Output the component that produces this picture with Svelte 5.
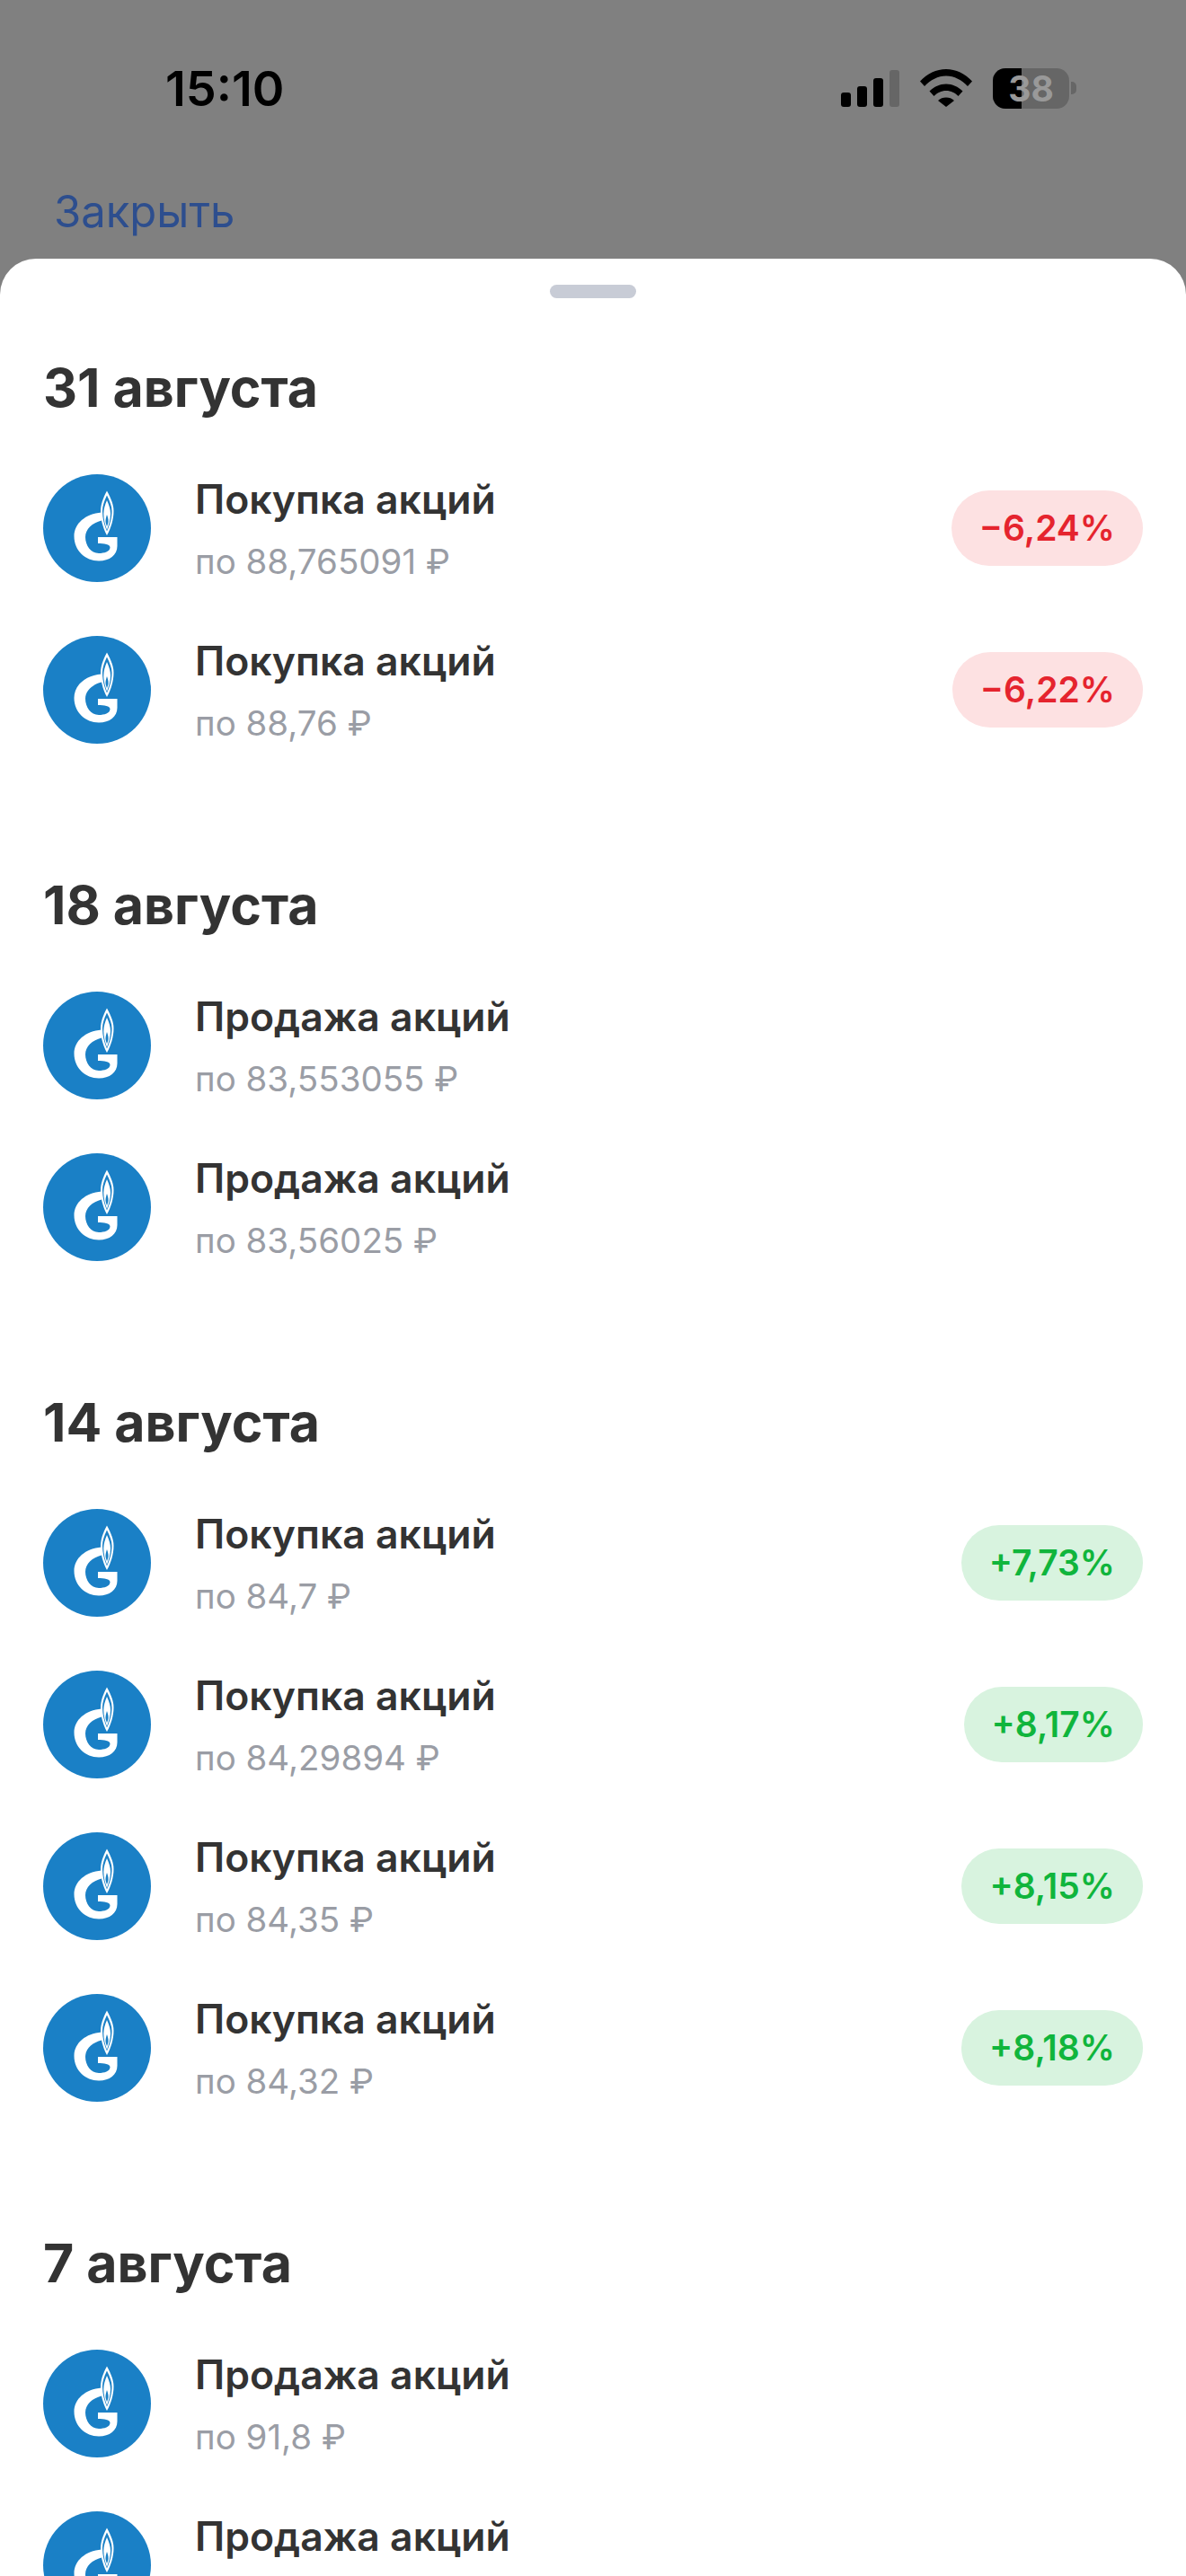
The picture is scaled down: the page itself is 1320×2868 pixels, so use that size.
<script>
	const up = (v) => ({ text: v, tone: 'up' });
	const down = (v) => ({ text: v, tone: 'down' });

	const sections = [
		{
			date: '31 августа',
			rows: [
				{ title: 'Покупка акций', price: 'по 88,765091 ₽', badge: down('−6,24%') },
				{ title: 'Покупка акций', price: 'по 88,76 ₽', badge: down('−6,22%') }
			]
		},
		{
			date: '18 августа',
			rows: [
				{ title: 'Продажа акций', price: 'по 83,553055 ₽' },
				{ title: 'Продажа акций', price: 'по 83,56025 ₽' }
			]
		},
		{
			date: '14 августа',
			rows: [
				{ title: 'Покупка акций', price: 'по 84,7 ₽', badge: up('+7,73%') },
				{ title: 'Покупка акций', price: 'по 84,29894 ₽', badge: up('+8,17%') },
				{ title: 'Покупка акций', price: 'по 84,35 ₽', badge: up('+8,15%') },
				{ title: 'Покупка акций', price: 'по 84,32 ₽', badge: up('+8,18%') }
			]
		},
		{
			date: '7 августа',
			rows: [
				{ title: 'Продажа акций', price: 'по 91,8 ₽' },
				{ title: 'Продажа акций', price: 'по 91,75 ₽' }
			]
		}
	];
</script>

<div class="screen">
	<header class="top">
		<div class="status">
			<span class="time">15:10</span>
			<div class="indicators">
				<div class="signal">
					<i style="height: 16px"></i>
					<i style="height: 23px"></i>
					<i style="height: 32px"></i>
					<i class="off" style="height: 41px"></i>
				</div>
				<svg class="wifi" viewBox="0 0 58 42" width="58" height="42">
					<path d="M0 13.5C8 5 18 0 29 0s21 5 29 13.5l-5 5.5C46.500 12 38 7.500 29 7.500S11.500 12 5 19z" />
					<path d="M10.500 24.500C15.500 19.500 22 16.500 29 16.500s13.500 3 18.500 8l-5 5.500C39 26.500 34.500 24 29 24s-10 2.500-13.500 6z" />
					<path d="M20 35c2.500-2.500 5.500-3.500 9-3.500s6.500 1 9 3.500l-9 7z" />
				</svg>
				<div class="battery">
					<div class="cell">
						<div class="charge"></div>
						<span>38</span>
					</div>
					<div class="tip"></div>
				</div>
			</div>
		</div>
		<div class="close">Закрыть</div>
	</header>

	<main class="sheet">
		<div class="handle"></div>
		{#each sections as section}
			<section>
				<h2>{section.date}</h2>
				<div class="rows">
					{#each section.rows as row}
						<div class="row">
							<svg class="logo" viewBox="0 0 120 120" width="120" height="120">
								<circle cx="60" cy="60" r="60" fill="#1a80c6" />
								<!-- flame: outer shell, gap, inner tongue, core -->
								<path
									fill="#fff"
									d="M71 18.500C66.500 27 64 34 64 41C64 50 66.500 60 71 68C75.500 60 78.500 50 78.500 41C78.500 34 75.500 27 71 18.500Z"
								/>
								<path
									fill="#1a80c6"
									d="M71 23.500C67.800 30 66 35.500 66 41C66 49 68 57 71 63.500C74 57 76.500 49 76.500 41C76.500 35.500 74.200 30 71 23.500Z"
								/>
								<path
									fill="#fff"
									d="M71 29C68.800 34 67.300 39 67.300 44C67.300 50 69 56.500 71 62C73 56.500 75 50 75 44C75 39 73.200 34 71 29Z"
								/>
								<path
									fill="#1a80c6"
									d="M71 45C70 48 69.500 50 69.500 52C69.500 54 70.200 56 71 58C71.800 56 72.600 54 72.600 52C72.600 50 72 48 71 45Z"
								/>
								<!-- G -->
								<path
									fill="#fff"
									d="M65 42.500C47 44 34.500 55 34.500 69C34.500 85 47 96.500 62 96.500C74 96.500 82.500 90 82.500 80V70H61V77C68 77 74.500 78 74.500 81.500C74.500 86 68 88 62 88C53 88 47 79 47 70C47 61 55 54 65 51.500Z"
								/>
							</svg>
							<div class="info">
								<div class="name">{row.title}</div>
								<div class="price">{row.price}</div>
							</div>
							{#if row.badge}
								<div class="badge {row.badge.tone}">{row.badge.text}</div>
							{/if}
						</div>
					{/each}
				</div>
			</section>
		{/each}
	</main>
</div>

<style>
	:global(body) {
		margin: 0;
		background: #fff;
	}

	.screen {
		width: 1320px;
		height: 2868px;
		overflow: hidden;
		background: #808080;
		font-family: Inter, 'Noto Sans', sans-serif;
		color: #333;
		display: flex;
		flex-direction: column;
	}

	.top {
		height: 288px;
		flex: none;
		box-sizing: border-box;
		padding-top: 66px;
	}

	.status {
		display: flex;
		justify-content: space-between;
		align-items: center;
		height: 64px;
		padding: 0 122px 0 184px;
	}

	.time {
		font-size: 54px;
		font-weight: 600;
		color: #000;
	}

	.indicators {
		display: flex;
		align-items: center;
	}

	.signal {
		display: flex;
		align-items: flex-end;
		gap: 7px;
		height: 41px;
		margin-right: 23px;
	}

	.signal i {
		display: block;
		width: 11px;
		background: #000;
		border-radius: 3px;
	}

	.signal i.off {
		background: #666;
	}

	.wifi {
		fill: #000;
		margin-right: 23px;
	}

	.battery {
		display: flex;
		align-items: center;
		gap: 2px;
	}

	.cell {
		width: 85px;
		height: 45px;
		border-radius: 14px;
		background: #666;
		overflow: hidden;
		position: relative;
		display: flex;
		align-items: center;
		justify-content: center;
	}

	.charge {
		position: absolute;
		left: 0;
		top: 0;
		bottom: 0;
		width: 32px;
		background: #000;
	}

	.cell span {
		position: relative;
		font-size: 39px;
		font-weight: 700;
		color: #999;
		line-height: 1;
	}

	.tip {
		width: 6px;
		height: 14px;
		background: #666;
		border-radius: 0 5px 5px 0;
	}

	.close {
		margin: 76px 0 0 60px;
		font-size: 49px;
		line-height: 60px;
		color: #2d4e8e;
	}

	.sheet {
		flex: 1;
		background: #fff;
		border-radius: 40px 40px 0 0;
		padding: 29px 48px 0;
	}

	.handle {
		width: 96px;
		height: 15px;
		margin: 0 auto 64px;
		border-radius: 8px;
		background: #c8ccd6;
	}

	section {
		margin-bottom: 144px;
	}

	h2 {
		margin: 0 0 60px;
		font-size: 59px;
		line-height: 72px;
		font-weight: 700;
		color: #333;
	}

	.rows {
		display: flex;
		flex-direction: column;
		gap: 60px;
	}

	.row {
		display: flex;
		align-items: center;
		height: 120px;
	}

	.logo {
		flex: none;
		margin-right: 49px;
	}

	.info {
		flex: 1;
		padding-top: 3px;
	}

	.name {
		font-size: 44.500px;
		line-height: 56px;
		font-weight: 600;
		color: #333;
	}

	.price {
		margin-top: 14px;
		font-size: 38.500px;
		line-height: 54px;
		color: #9a9da5;
	}

	.badge {
		height: 84px;
		line-height: 84px;
		padding: 0 31px;
		border-radius: 42px;
		font-size: 39px;
		font-weight: 600;
	}

	.badge.down {
		background: #fde1e2;
		color: #e5242e;
	}

	.badge.up {
		background: #d8f3df;
		color: #10b53c;
	}
</style>
